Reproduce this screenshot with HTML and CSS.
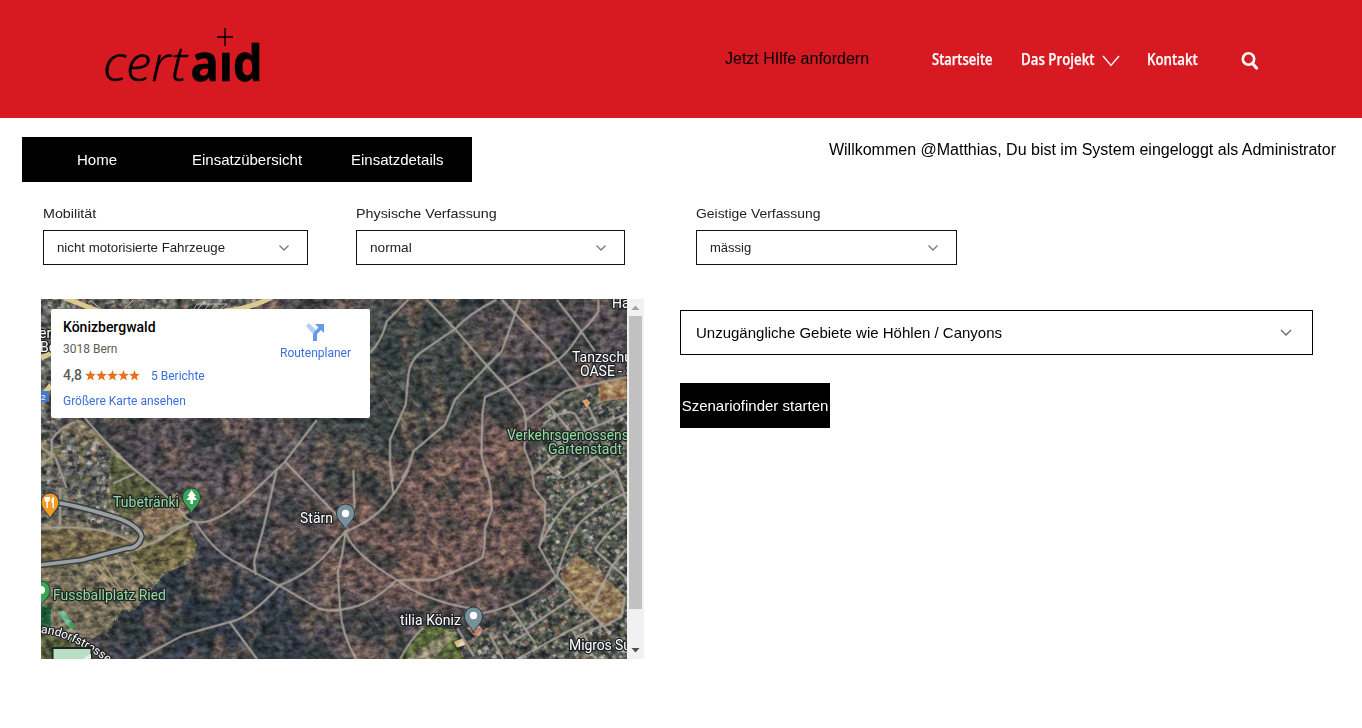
FILE: index.html
```html
<!DOCTYPE html>
<html lang="de">
<head>
<meta charset="utf-8">
<title>certaid</title>
<link rel="stylesheet" href="styles.css">
</head>
<body>
<header class="header">
  <svg class="logo" viewBox="90 4 186 106" role="img" aria-label="certaid">
    <text class="logo-thin" x="103" y="81" textLength="84" lengthAdjust="spacingAndGlyphs">cert</text>
    <text class="logo-bold" x="190.500" y="81" textLength="72" lengthAdjust="spacingAndGlyphs">aıd</text>
    <path d="M225 28v18M217 37h16" stroke="#000" stroke-width="1.400"/>
  </svg>
  <nav class="nav">
    <a class="help">Jetzt HIlfe anfordern</a>
    <a class="link start"><span>Startseite</span></a>
    <a class="link project"><span>Das Projekt</span></a>
    <svg class="nav-chev" viewBox="0 0 18 12"><path d="M1 1l8 9.500L17 1" fill="none" stroke="#fff" stroke-width="1.400"/></svg>
    <a class="link contact"><span>Kontakt</span></a>
    <svg class="search" viewBox="0 0 18 20"><circle cx="7.500" cy="8" r="5.700" fill="none" stroke="#fff" stroke-width="2.600"/><path d="M11.500 12.500l4 4.500" stroke="#fff" stroke-width="3.200" stroke-linecap="round"/></svg>
  </nav>
</header>
<div class="topline">
  <nav class="tabs"><a class="t1">Home</a><a class="t2">Einsatzübersicht</a><a class="t3">Einsatzdetails</a></nav>
  <div class="welcome">Willkommen @Matthias, Du bist im System eingeloggt als Administrator</div>
</div>
<div class="filters">
  <div class="field f1"><label><span>Mobilität</span></label><div class="select"><span>nicht motorisierte Fahrzeuge</span><svg class="chev" viewBox="0 0 12 8"><path d="M1.500 1.500L6 6l4.500-4.500"/></svg></div></div>
  <div class="field f2"><label><span>Physische Verfassung</span></label><div class="select"><span>normal</span><svg class="chev" viewBox="0 0 12 8"><path d="M1.500 1.500L6 6l4.500-4.500"/></svg></div></div>
  <div class="field f3"><label><span>Geistige Verfassung</span></label><div class="select"><span>mässig</span><svg class="chev" viewBox="0 0 12 8"><path d="M1.500 1.500L6 6l4.500-4.500"/></svg></div></div>
</div>
<main class="main">
  <div class="mapframe">
    <svg class="map" viewBox="41 299 586 360">
      <defs>
        <filter id="grain" x="0" y="0" width="100%" height="100%" color-interpolation-filters="sRGB">
          <feTurbulence type="fractalNoise" baseFrequency=".13 .17" numOctaves="5" seed="5" result="n"/>
          <feColorMatrix in="n" values="1.6 .3 0 0 -.5  1.5 .4 0 0 -.5  1.4 .2 .3 0 -.48  0 0 0 0 1"/>
        </filter>
        <filter id="patches" x="0" y="0" width="100%" height="100%" color-interpolation-filters="sRGB">
          <feTurbulence type="fractalNoise" baseFrequency=".022 .028" numOctaves="6" seed="11"/>
          <feColorMatrix values="0 0 0 0 .18  0 0 0 0 .22  0 0 0 0 .22  6 0 0 0 -2.900"/>
        </filter>
        <filter id="soil" x="0" y="0" width="100%" height="100%" color-interpolation-filters="sRGB">
          <feTurbulence type="fractalNoise" baseFrequency=".035 .025" numOctaves="6" seed="31"/>
          <feColorMatrix values="0 0 0 0 .53  0 0 0 0 .42  0 0 0 0 .36  0 6 0 0 -3.100"/>
        </filter>
        <filter id="soft" x="-20%" y="-20%" width="140%" height="140%"><feGaussianBlur stdDeviation="12"/></filter>
        <filter id="rough" x="-10%" y="-10%" width="120%" height="120%"><feTurbulence type="fractalNoise" baseFrequency=".1" numOctaves="3" result="t"/><feDisplacementMap in="SourceGraphic" in2="t" scale="9"/></filter>
        <clipPath id="east"><path d="M545 408l22-18 60-16v285H440l45-30 72-38-14-50 5-55-13-30z"/></clipPath>
        <clipPath id="north"><path d="M41 299h225l-35 32H41z"/></clipPath>
        <clipPath id="west"><path d="M41 300h20v150l-20-10zM41 466l22-7 0-25 12 0 6 35 7-28 23 8-3 56 24 18v14l-65-20-26 6z"/></clipPath>
        <path id="pin" d="M0 16C-2 9-9 7-9-1A9 9 0 1 1 9-1C9 7 2 9 0 16z"/>
      </defs>
      <rect x="41" y="299" width="586" height="360" fill="#585154"/>
      <g filter="url(#soft)">
        <path d="M430 400l100 20 20 160-110 30-100-20-20-70 40-80z" fill="#715a54"/>
        <path d="M380 299h75l60 80-60 60-110 50-60-90z" fill="#454b48"/>
        <path d="M180 540l100 30 40 100H110l10-70z" fill="#363c46"/>
      </g>
      <rect x="41" y="299" width="586" height="360" filter="url(#patches)" opacity=".7"/>
      <rect x="41" y="299" width="586" height="360" filter="url(#soil)" opacity=".5"/>
      <g stroke="#aa8873" stroke-width="1" opacity=".4">
        <path d="M390 475l80 125M405 470l75 130M425 455l75 115M450 475l65 90M470 470l65 80M340 570l40 60M365 575l35 50M400 585l25 35M440 575l15 30M370 350l60 70M375 385l30 45"/>
      </g>
      <g transform="translate(40 420) scale(.33333)" filter="url(#rough)">
        <path d="M50 40l70-45 90 80 230 220 30 80-10 50-85 35-90 110-80-5-15 70-100 60L0 640V60z" fill="#80785f"/>
        <path d="M215 100l50 35 120 105-160 70-15-85z" fill="#5a6140"/>
        <path d="M280 300l130-85 40 60-110 75z" fill="#8c765b"/>
        <path d="M0 335l150-15 140 45-100 40-190 25z" fill="#76694c"/>
        <path d="M275 395l175-75 15 65-35 40-80 50-70-40z" fill="#716a47"/>
        <path d="M45 465l110-30 100 120-55 90-120-20-40-70z" fill="#78715a"/>
        <path d="M0 560h32v65H0z" fill="#1d5b34"/><path d="M0 640l180 50v30H0z" fill="#585f3d"/>
        <path d="M52 575l18-3 35 45-12 15z" fill="#68b488"/>
      </g>
      <g clip-path="url(#east)"><rect x="430" y="370" width="200" height="290" fill="#565a52"/><g id="houses-east" opacity=".8"></g></g>
      <g clip-path="url(#north)"><rect x="41" y="299" width="240" height="35" fill="#64665f"/><g id="houses-north" opacity=".8"></g></g>
      <g clip-path="url(#west)"><rect x="41" y="299" width="110" height="240" fill="#656660"/><g id="houses-west" opacity=".8"></g></g>
      <g transform="translate(330 470) scale(.33333)">
        <path d="M690 310l50-55 60 40 85 85-10 60-60 25-90-70z" fill="#957f5d"/>
        <path d="M210 570l70-105 95 15 25 90z" fill="#5d6b3d"/><path d="M230 568l120-85 30 5-70 80z" fill="#8c876c"/>
        <path d="M410 475l30-15 20 20-20 25z" fill="#b98771"/><path d="M372 515l25-10 10 18-26 10z" fill="#ddc99e"/>
      </g>
      <g transform="translate(360 298) scale(.33333)"><path d="M715 255l85-15v60l-82 12z" fill="#a98a62"/><path d="M665 310l16-8 10 12-10 15z" fill="#e5b18d"/></g>
      <rect x="41" y="299" width="586" height="360" filter="url(#grain)" style="mix-blend-mode:overlay" opacity=".5"/>
      <g fill="none" stroke="#dcc98f" stroke-width="5"><path d="M63 297l50 20M272 297q-22 12-48 14M41 358l30-15M43 395l8-10"/></g>
      <g fill="none" stroke="#b8b7ad" stroke-width="1"><path d="M90 300l30 25M133 300l-23 24M197 304h30l-20 16h-20zM202 304l-13 16M209 304l-12 16M216 304l-12 16"/></g>
      <!-- Forest paths, grouped by map quadrant -->
      <g class="paths">
        <g transform="translate(360 298) scale(.33333)">
          <path d="M145 5L80 70Q65 130 30 165M200 5l85 88 95 110 65 70 45 60 8 35-5 85 30 75M425 5l140 145 90 115M590 5l70 90 45 65M410 5Q330 45 285 93L180 165Q150 190 145 230L137 320 90 425v75l10 50M480 5l-55 155-45 45-95 100-30 75-95 80-15 50-20 30M715 5v35q-25 40-50 58-45 75-80 92l-140 75-70 32-8 50-3 120 15 70M498 365l115-85q70-20 187-42"/>
          <path d="M565 320l65 80M550 378q65-50 95-30l30 50 135-55M685 325l25 55M520 528l70-60M560 510l50 30 100-65 70 70M780 520l80-80"/>
        </g>
        <g transform="translate(40 420) scale(.33333)">
          <path d="M120-30l20 30q80 95 145 150 110 85 155 145 65 45 200-80L735 125 830 0M735 125l165 170M710 150l-40 175-28 100 5 40M465 305q50 80 110 115l140 75 120 70q35 10 70 5M0 325q180-15 275 40M275 390q65-15 130-60l50-25M220 190l65-30M290 720l140-75 135-38q65-10 155-112 110-40 180-145M568 605l85 115M35 105V60q20-35 70-55M0 80l40 25-40 35M45 110l35 95M60 205v110"/>
          <path d="M150 435l120 140M165 430l110 130M185 425l75 110M235 410l30 75 25-25-15-30 65 60" stroke="#ad9b81" stroke-width="5"/>
        </g>
        <g transform="translate(330 470) scale(.33333)">
          <path d="M70 0l3 110-27 75q-8 75-23 120l7 110q5 80 50 155M180 0l10 70Q155 140 46 185L0 235M235 0l-45 75M46 185q20 65 155 145 80 60 220 85M0 420q105 5 200-90h110q80-30 145-65 10-20 10-90l20-55q0-80-22-135M605 0l8 55 32 40v65l-18 70 50 90q-80 80-220 110M627 230q40-80 100-150l130-80 35 100M680 320l160 170M680 320q40-145 85-175 60-50 130-80M780 420l65-130 45-55M795 240q30-50 95-100M795 240l95 85M210 568q30-60 70-95M382 475l50 85M480 495l40 75M560 568l165-90 80-40M585 480l140-95M540 410l75 110M520 490l20 30 50-30M600 415l20 35M725 475l30 60M760 490l25 45M740 500l80-35M800 570l-60-75M820 470l55-30 10-60"/>
        </g>
      </g>
      <g transform="translate(40 420) scale(.33333)" fill="none">
        <path d="M30 245q60 5 205 50 65 25 70 55-10 35-45 35L125 420 0 435" stroke="#373f45" stroke-width="20"/><path d="M30 245q60 5 205 50 65 25 70 55-10 35-45 35L125 420 0 435" stroke="#9da0a0" stroke-width="11"/>
      </g>
      <rect x="30" y="391" width="19" height="11" fill="#4479c5"/><text x="41" y="400" fill="#fff" font-size="8">2</text>
      <g class="pins">
        <use href="#pin" x="50" y="503" fill="#f29b26"/><use href="#pin" x="191.500" y="498" fill="#3aa556"/><use href="#pin" x="345.500" y="514" fill="#78909c"/><use href="#pin" x="473.500" y="617" fill="#78909c"/><use href="#pin" x="41" y="591" fill="#3aa556"/>
      </g>
      <path d="M191.500 490l-4 6h2l-3 4h4v4h2.500v-4h4l-3-4h2z" fill="#fff"/><path d="M44.500 497h5.500v3q-1 2-2 2v6h-1.500v-6q-2 0-2-2zM51.500 500q0-3 2.500-3v11h-1.500v-5h-1z" fill="#fff"/>
      <circle cx="345.500" cy="513.500" r="3.700" fill="#fff"/><circle cx="473.500" cy="615.500" r="3.700" fill="#fff"/><circle cx="41" cy="590" r="4" fill="#fff"/>
      <g class="labels">
        <text x="39" y="338">er</text><text x="40" y="352">Be</text>
        <text x="612" y="308">Ha</text><text x="572" y="362">Tanzschu</text><text x="580" y="376">OASE - S</text>
        <text x="300" y="523" textLength="33">Stärn</text><text x="400" y="625" textLength="61">tilia Köniz</text><text x="569" y="650" textLength="62">Migros Su</text>
        <g class="green"><text x="507" y="440" textLength="122">Verkehrsgenossens</text><text x="548" y="454" textLength="74">Gartenstadt</text><text x="113" y="507" textLength="66">Tubetränki</text><text x="53" y="600" textLength="113">Fussballplatz Ried</text></g>
        <path id="street" d="M41 633Q70 635 109 664" fill="none" stroke="none"/><text class="street"><textPath href="#street">andorfstrasse</textPath></text>
      </g>
      <rect x="52.500" y="648" width="39" height="14" fill="#b8dfc4" stroke="#222" stroke-width="2"/><path d="M83 660q2-5 8-6v7z" fill="#e7e8eb"/>
    </svg>
    <div class="scrollbar"><svg viewBox="0 0 17 17"><path d="M4.500 11L8.500 6.500l4 4.500z" fill="#a3a3a3"/></svg><div class="thumb"></div><svg class="down" viewBox="0 0 17 17"><path d="M4.500 6L8.500 10.500l4-4.500z" fill="#505050"/></svg></div>
    <section class="card">
      <div class="place">
        <h1>Könizbergwald</h1><p class="city">3018 Bern</p>
        <p class="rating"><b>4,8</b><svg class="stars" viewBox="0 0 55 11"><defs><path id="star" d="M5.500 0l1.400 3.800 4 .100-3.200 2.500 1.200 4.100-3.400-2.300-3.400 2.300 1.200-4.100L.1 3.900l4-.1z"/></defs><g fill="#e7711b"><use href="#star"/><use href="#star" x="11"/><use href="#star" x="22"/><use href="#star" x="33"/><use href="#star" x="44"/></g></svg><a>5 Berichte</a></p>
        <a class="bigger">Größere Karte ansehen</a>
      </div>
      <a class="route"><svg viewBox="0 0 19 19"><path d="M0 3L3 0l7 7-3 4z" fill="#b3cff5"/><path d="M7 18V12q0-2 2-4l3.500-3.500L9 1h9v9l-3-3-3.500 3.500q-.500.500-.500 1.500v6z" fill="#6599e2"/></svg><span>Routenplaner</span></a>
    </section>
  </div>
  <div class="finder">
    <div class="select large"><span>Unzugängliche Gebiete wie Höhlen / Canyons</span><svg class="chev" viewBox="0 0 12 8"><path d="M1 1l5 5 5-5"/></svg></div>
    <button>Szenariofinder starten</button>
  </div>
</main>
<script src="map.js"></script>
</body>
</html>
```
FILE: styles.css
```css
* { box-sizing: border-box; }
body { margin: 0; width: 1362px; height: 728px; overflow: hidden; background: #fff; color: #000; font: 16px "Liberation Sans", Arial, sans-serif; }
.header { height: 118px; background: #d71921; display: flex; padding-left: 90px; }
.logo { width: 186px; height: 106px; margin-top: 4px; flex: none; }
.logo-thin { font: italic 300 48px "Open Sans", sans-serif; stroke: #000; stroke-width: .4px; }
.logo-bold { font: 700 50px "Noto Sans", "Open Sans", sans-serif; stroke: #000; stroke-width: .5px; }
.nav { display: flex; align-items: center; height: 118px; margin-left: 449px; }
.help { width: 207px; white-space: nowrap; }
.link { color: #fff; font: 600 16px/20px "Open Sans", sans-serif; white-space: nowrap; }
.link span { display: inline-block; transform-origin: 0 50%; -webkit-text-stroke: .25px #fff; }
.start { width: 89px; }
.start span { transform: scaleX(.81); }
.project { width: 81px; }
.project span { transform: scaleX(.83); }
.nav-chev { width: 18px; height: 12px; margin-top: 4px; }
.contact { width: 94px; margin-left: 27px; }
.contact span { transform: scaleX(.83); }
.search { width: 18px; height: 20px; margin-top: 4px; }
.topline { display: flex; justify-content: space-between; padding: 19px 26px 0 22px; }
.tabs { width: 450px; height: 45px; background: #000; color: #fff; display: flex; align-items: center; padding-left: 55px; font-size: 15px; }
.t1 { width: 115px; }
.t2 { width: 159px; }
.welcome { margin-top: 3px; line-height: 20px; white-space: nowrap; }
.filters { display: flex; padding: 23px 0 0 43px; font-size: 13px; color: #222; }
.field label { display: block; height: 25px; line-height: 17px; }
.field span { display: inline-block; white-space: nowrap; transform-origin: 0 50%; }
.f1 { width: 265px; margin-right: 48px; }
.f2 { width: 269px; margin-right: 71px; }
.f3 { width: 261px; }
.f1 label span { transform: scaleX(1.1); }
.f2 label span { transform: scaleX(1.1); }
.f3 label span { transform: scaleX(1.07); }
.f1 .select span { transform: scaleX(1.02); }
.f2 .select span { transform: scaleX(1.05); }
.select { height: 35px; border: 1px solid #111; display: flex; align-items: center; justify-content: space-between; padding: 0 17px 0 13px; }
.chev { width: 12px; height: 8px; fill: none; stroke: #777; stroke-width: 1.3; }
.main { display: flex; padding: 34px 0 0 41px; }
.mapframe { position: relative; width: 603px; height: 360px; display: flex; overflow: hidden; font-family: Roboto, sans-serif; }
.map { width: 586px; height: 360px; flex: none; }
.paths { fill: none; stroke: #aaa39b; stroke-width: 6.5; stroke-linejoin: round; opacity: .92; }
.pins { stroke: #263c40; stroke-width: 1; }
.labels { font-size: 14px; fill: #fff; stroke: #202326; stroke-width: 2.5px; paint-order: stroke; stroke-linejoin: round; }
.green { fill: #93dca0; }
.street { font-size: 12px; }
.scrollbar { width: 17px; height: 360px; background: #f1f1f1; display: flex; flex-direction: column; }
.scrollbar svg { width: 17px; height: 17px; }
.thumb { width: 13px; height: 293px; margin-left: 2px; background: #c1c1c1; }
.scrollbar .down { margin-top: auto; }
.card { position: absolute; left: 10px; top: 10px; width: 319px; height: 109px; background: #fff; border-radius: 2px; padding: 10px 19px 0 12px; display: flex; justify-content: space-between; font-size: 12px; color: #5b5b5b; }
.card h1 { margin: 0; color: #000; font-size: 14px; line-height: 16px; font-weight: 500; }
.card p { margin: 0; }
.city { padding-top: 6px; line-height: 16px; }
.card .rating { display: flex; align-items: center; height: 16px; margin-top: 10px; }
.rating b { font-size: 14px; font-weight: 500; width: 22px; }
.stars { width: 55px; height: 11px; margin-right: 11px; }
.card a { color: #3b6fda; }
.rating a { padding-top: 1px; }
.bigger { display: block; margin-top: 10px; line-height: 16px; }
.route { display: flex; flex-direction: column; align-items: center; padding-top: 4px; }
.route svg { width: 19px; height: 19px; }
.route span { line-height: 16px; margin-top: 3px; }
.finder { margin: 11px 0 0 36px; }
.large { width: 633px; height: 45px; border-color: #000; padding: 0 20px 0 15px; font-size: 15px; }
.large .chev { stroke: #666; }
.finder button { display: block; width: 150px; height: 45px; margin-top: 28px; padding: 0; border: 0; background: #000; color: #fff; font: 15px "Liberation Sans", Arial, sans-serif; white-space: nowrap; }
```
FILE: map.js
```js
// Fills the built-up areas of the aerial map with small roofs and gardens.
let seed = 17;
const random = () => (seed = (seed * 16807) % 2147483647) / 2147483647;
const roofs = ["#9a9891", "#3d473f", "#7c7872", "#aaa59b", "#5d5a59", "#a07a68", "#4c5840", "#2c3338", "#77795a"];

function build(id, x, y, w, h, angle, step) {
  let shapes = "";
  for (let py = y; py < y + h; py += step) {
    for (let px = x; px < x + w; px += step) {
      const cx = px + random() * 3, cy = py + random() * 3;
      const fill = roofs[Math.floor(random() * roofs.length)];
      shapes += `<rect x="${cx}" y="${cy}" width="${2 + random() * 3.5}" height="${2 + random() * 3}" fill="${fill}" transform="rotate(${angle} ${cx} ${cy})"/>`;
    }
  }
  document.getElementById(id).innerHTML = shapes;
}

build("houses-east", 430, 365, 200, 295, -32, 4.6);
build("houses-north", 41, 299, 240, 35, -25, 5);
build("houses-west", 41, 299, 105, 240, 12, 5);
```
